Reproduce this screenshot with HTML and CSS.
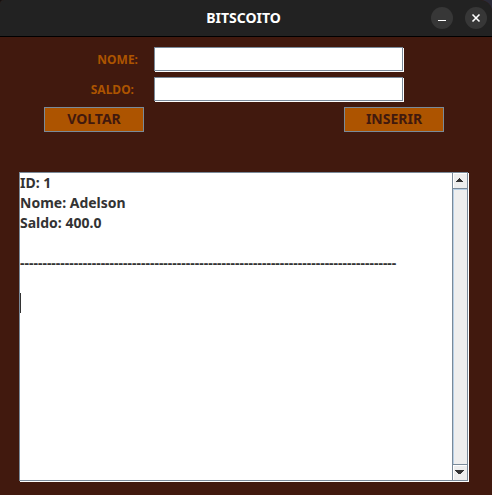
FILE: index.html
```html
<!DOCTYPE html>
<html lang="pt-BR">
<head>
<meta charset="utf-8">
<title>BITSCOITO</title>
<link rel="stylesheet" href="styles.css">
</head>
<body>
<div class="window">
  <header class="titlebar">
    <h1 class="title">BITSCOITO</h1>
    <div class="window-controls">
      <button class="control" type="button" aria-label="Minimizar">
        <svg width="22" height="22" viewBox="0 0 22 22"><path d="M7 13h8v1H7z" fill="#fff"/></svg>
      </button>
      <button class="control" type="button" aria-label="Fechar">
        <svg width="22" height="22" viewBox="0 0 22 22"><path d="M7.5 7.5l7 7M14.5 7.5l-7 7" stroke="#fff" stroke-width="1.6" fill="none"/></svg>
      </button>
    </div>
  </header>
  <main class="content">
    <form class="form">
      <div class="row">
        <label class="label" for="nome">NOME:</label>
        <input class="field" id="nome" type="text">
      </div>
      <div class="row">
        <label class="label label-wide" for="saldo">SALDO:</label>
        <input class="field" id="saldo" type="text">
      </div>
      <div class="actions">
        <button class="action" type="button">VOLTAR</button>
        <button class="action" type="button">INSERIR</button>
      </div>
    </form>
    <div class="panel">
      <div class="editor">
        <textarea class="output" aria-label="Registros" spellcheck="false">ID: 1
Nome: Adelson
Saldo: 400.0

------------------------------------------------------------------------------------

</textarea>
        <span class="caret"></span>
      </div>
      <div class="scrollbar">
        <button class="arrow arrow-up" type="button" aria-label="Rolar para cima">
          <svg width="14" height="15" viewBox="0 0 14 15"><path d="M6 5h1v1h1v1h1v1h1v1H3V8h1V7h1V6h1z" fill="#333"/></svg>
        </button>
        <div class="track"></div>
        <button class="arrow arrow-down" type="button" aria-label="Rolar para baixo">
          <svg width="14" height="15" viewBox="0 0 14 15"><path d="M2 5h9v1h-1v1H9v1H8v1H5V8H4V7H3V6H2z" fill="#333"/></svg>
        </button>
      </div>
    </div>
  </main>
</div>
</body>
</html>
```

FILE: styles.css
```css
* {
  box-sizing: border-box;
}

body {
  margin: 0;
  background: linear-gradient(to right, #111 50%, #2b2b38 50%);
  font-family: "Noto Sans", sans-serif;
  font-weight: bold;
}

button,
input,
textarea {
  margin: 0;
  padding: 0;
  border: 0;
  font: inherit;
  outline: none;
}

svg {
  display: block;
}

.window {
  display: flex;
  flex-direction: column;
  min-height: 100vh;
  background: #41190e;
  border-radius: 4px 12px 0 0;
  overflow: hidden;
}

.titlebar {
  display: grid;
  grid-template-columns: 1fr auto 1fr;
  align-items: center;
  height: 37px;
  padding: 0 5px 0 0;
  background: #222;
  border-bottom: 1px solid #000;
}

.title {
  grid-column: 2;
  margin: 0;
  color: #fff;
  font-size: 14px;
  line-height: 20px;
}

.window-controls {
  display: flex;
  justify-content: flex-end;
  gap: 12px;
}

.control {
  width: 22px;
  height: 22px;
  border-radius: 50%;
  background: #373737;
}

.content {
  display: flex;
  flex: 1;
  flex-direction: column;
  gap: 40px;
  padding: 10px 23px 13px 19px;
}

.form {
  display: flex;
  flex-direction: column;
  gap: 5px;
  padding: 0 25px;
}

.row {
  display: flex;
  align-items: center;
  height: 25px;
  padding-right: 40px;
}

.label {
  width: 110px;
  padding-right: 16px;
  color: #ad5400;
  font-size: 12px;
  line-height: 16px;
  text-align: right;
}

.label-wide {
  padding-right: 20px;
}

.field {
  flex: 1;
  min-width: 0;
  height: 24px;
  margin: 0 1px 1px 0;
  padding: 0 2px;
  border: 1px solid #7a8a99;
  background: #fff;
  box-shadow: 1px 1px 0 #fff;
  color: #333;
  font-size: 14px;
}

.actions {
  display: flex;
  justify-content: space-between;
}

.action {
  width: 100px;
  height: 25px;
  padding-bottom: 2px;
  border: 1px solid #7a8a99;
  background: #ad5400;
  color: #41190e;
  font-size: 14px;
  line-height: 20px;
}

.panel {
  display: flex;
  flex: 1;
  margin: 0 1px 1px 0;
  border: 1px solid #7a8a99;
  background: #fff;
  box-shadow: 1px 1px 0 #fff;
}

.editor {
  position: relative;
  display: flex;
  flex: 1;
}

.output {
  flex: 1;
  min-width: 0;
  resize: none;
  overflow: hidden;
  background: #fff;
  color: #333;
  font-size: 14px;
  line-height: 20px;
}

.caret {
  position: absolute;
  top: 120px;
  left: 0;
  width: 1px;
  height: 20px;
  background: #333;
}

.scrollbar {
  display: flex;
  flex-direction: column;
  width: 15px;
  border-left: 1px solid #7a8a99;
  background: #eee;
}

.arrow {
  height: 16px;
  background: #eee;
  box-shadow: inset 1px 1px 0 #fff;
}

.arrow-up {
  border-bottom: 1px solid #7a8a99;
}

.arrow-down {
  border-top: 1px solid #7a8a99;
}

.track {
  flex: 1;
  border-top: 1px solid #b8cfe5;
  border-left: 1px solid #b8cfe5;
}
```
